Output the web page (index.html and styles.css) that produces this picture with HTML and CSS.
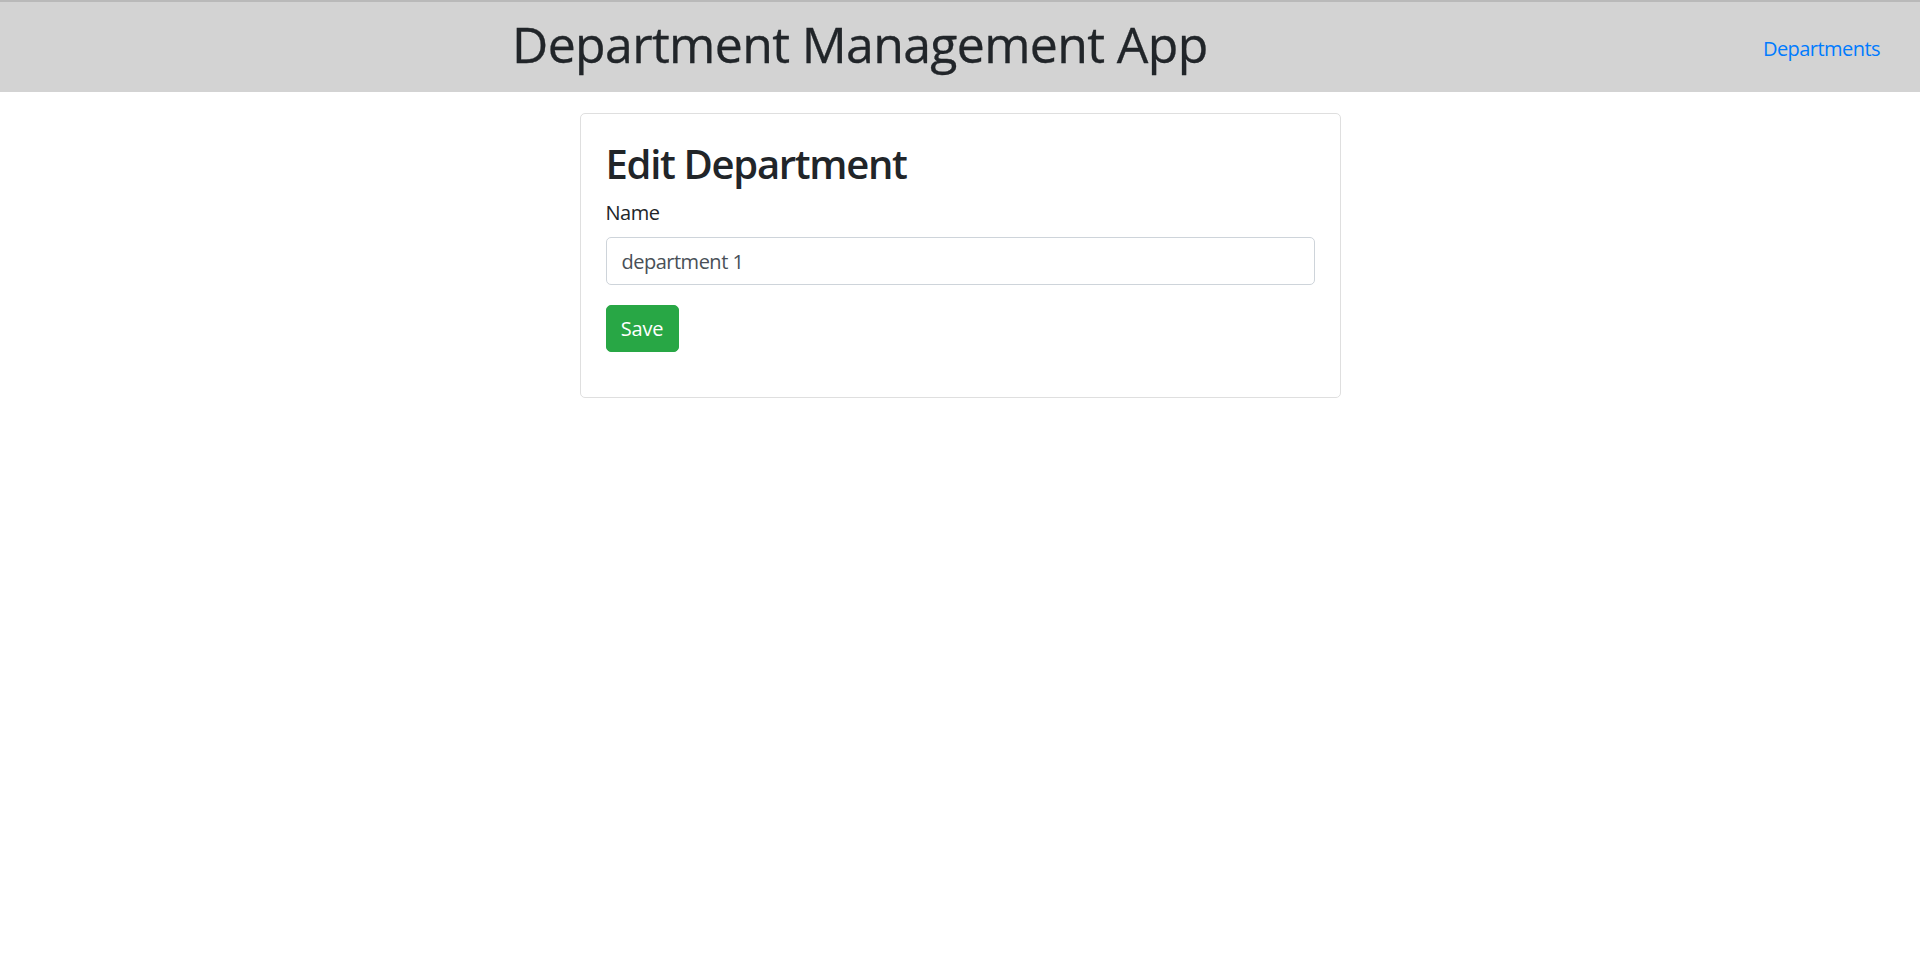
FILE: index.html
```html
<!DOCTYPE html>
<html lang="en">
<head>
<meta charset="utf-8">
<title>Department Management App</title>
<link rel="stylesheet" href="styles.css">
</head>
<body>
<header class="topbar">
  <h1 class="brand">Department Management App</h1>
  <nav class="nav"><a class="nav-link" href="#">Departments</a></nav>
</header>
<main class="page">
  <section class="card">
    <h2 class="card-title">Edit Department</h2>
    <form class="form">
      <div class="form-group">
        <label class="label" for="name">Name</label>
        <input class="input" id="name" type="text" value="department 1">
      </div>
      <button class="btn-save" type="button">Save</button>
    </form>
  </section>
</main>
</body>
</html>
```

FILE: styles.css
```css
* { box-sizing: border-box; }
html, body { margin: 0; padding: 0; }
body {
  font-family: "Open Sans", "Noto Sans", "Liberation Sans", sans-serif;
  font-size: 20px;
  line-height: 1.5;
  color: #212529;
  background: #fff;
}
.topbar {
  display: flex;
  align-items: center;
  height: 92px;
  background: #d3d3d3;
  border-top: 2px solid #b9b9b9;
  padding: 10px 40px 10px 0;
}
.brand {
  margin: 0 0 8px 512px;
  padding-top: 2px;
  font-size: 50px;
  font-weight: 400;
  line-height: 60px;
  letter-spacing: -0.65px;
  color: #212529;
  -webkit-text-stroke: 0.3px #212529;
}
.nav { margin-left: auto; }
.nav-link {
  display: block;
  padding-top: 4px;
  color: #007bff;
  text-decoration: none;
  font-size: 20px;
  line-height: 30px;
  letter-spacing: -0.55px;
}
.page { padding-top: 21px; }
.card {
  width: 761px;
  margin: 0 auto;
  border: 1px solid #dfdfdf;
  border-radius: 5px;
  padding: 25px;
}
.card-title {
  margin: 0 0 9px;
  padding-top: 1px;
  font-size: 40px;
  font-weight: 600;
  line-height: 48px;
  letter-spacing: -1.3px;
}
.form { margin: 0 0 20px; }
.form-group { margin-bottom: 20px; }
.label {
  display: block;
  margin-bottom: 9px;
  padding-top: 1px;
  line-height: 30px;
  letter-spacing: -0.5px;
}
.input {
  display: block;
  width: 100%;
  height: 47.5px;
  padding: 8.5px 15px 6.5px;
  font: inherit;
  letter-spacing: -0.5px;
  color: #495057;
  background: #fff;
  border: 1px solid #ced4da;
  border-radius: 5px;
  outline: none;
}
.btn-save {
  display: block;
  width: 73px;
  height: 47.5px;
  padding: 2px 0 0;
  font: inherit;
  letter-spacing: -0.2px;
  color: #fff;
  background: #28a745;
  border: 1px solid #28a745;
  border-radius: 5px;
}
```
